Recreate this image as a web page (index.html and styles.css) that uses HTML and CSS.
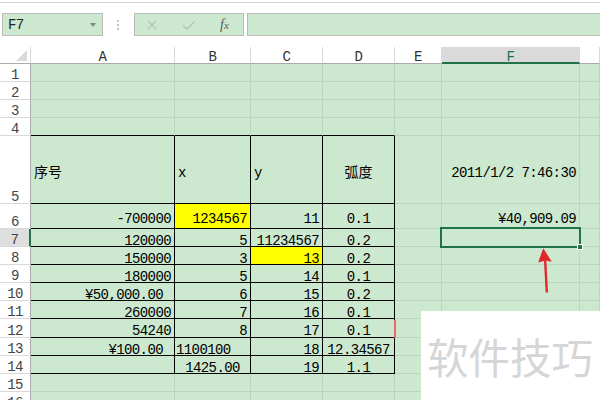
FILE: index.html
```html
<!DOCTYPE html>
<html>
<head>
<meta charset="utf-8">
<link rel="stylesheet" href="styles.css">
</head>
<body>
<div class="app">
  <div class="topline"></div>
  <div class="toolbar">
    <div class="namebox"><span class="ref">F7</span><span class="caret"></span></div>
    <div class="grip"><i></i><i></i><i></i></div>
    <div class="fxbox">
      <svg class="ico-x" width="10" height="10" viewBox="0 0 10 10"><path d="M1 1L9 9M9 1L1 9" stroke="#adc8ae" stroke-width="1.3" fill="none"/></svg>
      <svg class="ico-ok" width="14" height="10" viewBox="0 0 14 10"><path d="M1 5.5L5 9L13 1" stroke="#adc8ae" stroke-width="1.3" fill="none"/></svg>
      <span class="fx">f<span class="fxs">x</span></span>
    </div>
    <div class="formula"></div>
  </div>

  <div class="sheet">
    <div class="c h corner"><svg width="11" height="11" viewBox="0 0 11 11"><path d="M11 0L11 11L0 11Z" fill="#dadada"/></svg></div>
    <div class="c h">A</div><div class="c h">B</div><div class="c h">C</div><div class="c h">D</div><div class="c h">E</div><div class="c h hsel">F</div><div class="c h"></div>

    <div class="c rh">1</div><div class="c"></div><div class="c"></div><div class="c"></div><div class="c"></div><div class="c"></div><div class="c"></div><div class="c"></div>
    <div class="c rh">2</div><div class="c"></div><div class="c"></div><div class="c"></div><div class="c"></div><div class="c"></div><div class="c"></div><div class="c"></div>
    <div class="c rh">3</div><div class="c"></div><div class="c"></div><div class="c"></div><div class="c"></div><div class="c"></div><div class="c"></div><div class="c"></div>
    <div class="c rh">4</div><div class="c bb"></div><div class="c bb"></div><div class="c bb"></div><div class="c bb"></div><div class="c"></div><div class="c"></div><div class="c"></div>

    <div class="c rh">5</div><div class="c bx cjk">序号</div><div class="c bx">x</div><div class="c bx">y</div><div class="c bx m cjk">弧度</div><div class="c"></div><div class="c r">2011/1/2 7:46:30</div><div class="c"></div>
    <div class="c rh">6</div><div class="c bx r">-700000</div><div class="c bx r y">1234567</div><div class="c bx r">11</div><div class="c bx m">0.1</div><div class="c"></div><div class="c r">¥40,909.09</div><div class="c"></div>
    <div class="c rh rsel">7</div><div class="c bx r">120000</div><div class="c bx r">5</div><div class="c bx r">11234567</div><div class="c bx m">0.2</div><div class="c"></div><div class="c"></div><div class="c"></div>
    <div class="c rh">8</div><div class="c bx r">150000</div><div class="c bx r">3</div><div class="c bx r y">13</div><div class="c bx m">0.2</div><div class="c"></div><div class="c"></div><div class="c"></div>
    <div class="c rh">9</div><div class="c bx r">180000</div><div class="c bx r">5</div><div class="c bx r">14</div><div class="c bx m">0.1</div><div class="c"></div><div class="c"></div><div class="c"></div>
    <div class="c rh">10</div><div class="c bx r acc">¥50,000.00</div><div class="c bx r">6</div><div class="c bx r">15</div><div class="c bx m">0.2</div><div class="c"></div><div class="c"></div><div class="c"></div>
    <div class="c rh">11</div><div class="c bx r">260000</div><div class="c bx r">7</div><div class="c bx r">16</div><div class="c bx m">0.1</div><div class="c"></div><div class="c"></div><div class="c"></div>
    <div class="c rh">12</div><div class="c bx r">54240</div><div class="c bx r">8</div><div class="c bx r">17</div><div class="c bx m">0.1</div><div class="c"></div><div class="c"></div><div class="c"></div>
    <div class="c rh">13</div><div class="c bx r acc">¥100.00</div><div class="c bx tight">1100100</div><div class="c bx r">18</div><div class="c bx m">12.34567</div><div class="c"></div><div class="c"></div><div class="c"></div>
    <div class="c rh">14</div><div class="c bx"></div><div class="c bx m">1425.00</div><div class="c bx r">19</div><div class="c bx m">1.1</div><div class="c"></div><div class="c"></div><div class="c"></div>
    <div class="c rh">15</div><div class="c"></div><div class="c"></div><div class="c"></div><div class="c"></div><div class="c"></div><div class="c"></div><div class="c"></div>
    <div class="c rh">16</div><div class="c"></div><div class="c"></div><div class="c"></div><div class="c"></div><div class="c"></div><div class="c"></div><div class="c"></div>

    <div class="selection"></div>
    <div class="handle"></div>
    <div class="redmark"></div>
    <svg class="arrow" width="30" height="50" viewBox="0 0 30 50">
      <path d="M15.2 16.5L16.8 46.5" stroke="#e2262c" stroke-width="2.4" fill="none" stroke-linecap="round"/>
      <path d="M13.3 3.2L21.8 16.8L15.4 15.6L8.2 17.4Z" fill="#e2262c"/>
    </svg>
    <div class="watermark">软件技巧</div>
  </div>
</div>
</body>
</html>
```

FILE: styles.css
```css
html, body {
  margin: 0;
  padding: 0;
  background: #ffffff;
  overflow: hidden;
}

.app {
  width: 600px;
  height: 400px;
  overflow: hidden;
  font-family: "Liberation Mono", monospace;
}

.topline {
  margin-top: 2px;
  height: 0;
  border-top: 1px solid #d4d4d4;
}

.toolbar {
  display: flex;
  align-items: stretch;
  height: 23px;
  margin-top: 10px;
  margin-bottom: 11px;
}

.namebox {
  box-sizing: border-box;
  width: 101px;
  margin-left: 2px;
  background: #cce8cf;
  border: 1px solid #bcbcbc;
  display: flex;
  align-items: center;
  justify-content: space-between;
  padding: 1px 6px 0 5px;
}

.ref {
  font-size: 14px;
  letter-spacing: -0.6px;
  color: #222;
}

.caret {
  width: 0;
  height: 0;
  border-left: 3.5px solid transparent;
  border-right: 3.5px solid transparent;
  border-top: 4px solid #858585;
  margin-top: -1px;
}

.grip {
  width: 3px;
  margin-left: 14px;
  display: flex;
  flex-direction: column;
  justify-content: center;
  gap: 2px;
}

.grip i {
  display: block;
  width: 2px;
  height: 2px;
  background: #c4c4c4;
}

.fxbox {
  box-sizing: border-box;
  width: 110px;
  margin-left: 14px;
  background: #cce8cf;
  border: 1px solid #bcbcbc;
  display: flex;
  align-items: center;
  padding-left: 12px;
}

.ico-x {
  display: block;
}

.ico-ok {
  display: block;
  margin-left: 25px;
}

.fx {
  margin-left: 24px;
  font-family: "Liberation Serif", serif;
  font-style: italic;
  font-size: 14px;
  color: #5a5a5a;
  line-height: 1;
}

.fxs {
  font-size: 11px;
}

.formula {
  flex: 1;
  margin-left: 3px;
  margin-right: -2px;
  background: #cce8cf;
  border: 1px solid #bcbcbc;
}

.sheet {
  position: relative;
  display: grid;
  grid-template-columns: 31px 144px 76px 72px 72px 47px 138px 1fr;
  grid-template-rows: 17px 18px 18px 18px 18px 68px 25px 18px 18px 18px 18px 18px 19px 18px 18px 18px 18px;
}

.c {
  box-sizing: border-box;
  min-width: 0;
  background: #cce8cf;
  border-right: 1px solid #b9d5bc;
  border-bottom: 1px solid #b9d5bc;
  display: flex;
  align-items: center;
  padding: 6px 3px 0 3px;
  font-size: 14px;
  letter-spacing: -0.6px;
  color: #000;
  white-space: nowrap;
}

.r { justify-content: flex-end; }
.m { justify-content: center; }
.tight { padding-left: 1px; }
.acc { padding-right: 11px; }
.y { background: #ffff00; }

.bb { border-bottom-color: #000; }
.bx { border-bottom-color: #000; border-right-color: #000; }

.cjk {
  font-family: "Noto Sans CJK SC", sans-serif;
  letter-spacing: 0;
  padding-top: 3px;
}

.h {
  background: #ffffff;
  border-right-color: #d8d8d8;
  border-bottom-color: #ababab;
  justify-content: center;
  color: #333;
  padding-top: 4px;
}

.corner {
  justify-content: flex-end;
  align-items: flex-end;
  padding: 0 3px 2px 0;
}

.corner svg { display: block; }

.hsel {
  background: #dadada;
  border-bottom: 2px solid #217346;
  color: #217346;
}

.rh {
  background: #ffffff;
  border-right-color: #ababab;
  border-bottom-color: #d8d8d8;
  justify-content: center;
  align-items: flex-end;
  padding: 0;
  line-height: 12px;
  color: #444;
}

.rsel {
  background: #dedede;
  border-right: 2px solid #217346;
}

.selection {
  position: absolute;
  left: 440px;
  top: 180px;
  width: 141px;
  height: 21px;
  box-sizing: border-box;
  border: 2px solid #217346;
}

.handle {
  position: absolute;
  left: 577px;
  top: 197px;
  width: 6px;
  height: 6px;
  background: #217346;
  border: 1px solid #fff;
  box-sizing: border-box;
}

.redmark {
  position: absolute;
  left: 394px;
  top: 273px;
  width: 2px;
  height: 18px;
  background: #e66a6a;
}

.arrow {
  position: absolute;
  left: 530px;
  top: 198px;
}

.watermark {
  position: absolute;
  left: 421px;
  top: 264px;
  width: 179px;
  height: 90px;
  background: #ffffff;
  display: flex;
  align-items: center;
  padding-left: 6px;
  box-sizing: border-box;
  font-family: "Noto Sans CJK SC", sans-serif;
  font-size: 41.5px;
  color: #d6d6d6;
  white-space: nowrap;
}
```
